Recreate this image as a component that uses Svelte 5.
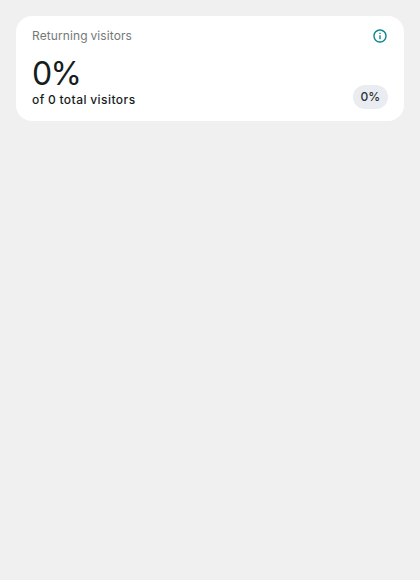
<script>
  let { title = 'Returning visitors', value = '0%', total = 0, change = '0%' } = $props();
</script>

<main>
  <section class="card">
    <header>
      <h2>{title}</h2>
      <svg class="info" viewBox="0 0 24 24" aria-label="Info">
        <path d="M11 7h2v2h-2zm0 4h2v6h-2zm1-9C6.48 2 2 6.48 2 12s4.48 10 10 10 10-4.48 10-10S17.52 2 12 2zm0 18c-4.41 0-8-3.59-8-8s3.59-8 8-8 8 3.59 8 8-3.59 8-8 8z" />
      </svg>
    </header>
    <div class="body">
      <div class="metric">
        <div class="value">{value}</div>
        <div class="total">of {total} total visitors</div>
      </div>
      <span class="badge">{change}</span>
    </div>
  </section>
</main>

<style>
  :global(body) {
    margin: 0;
    background: #f0f0f0;
  }
  main {
    box-sizing: border-box;
    min-height: 580px;
    padding: 16px;
    font-family: 'Google Sans', Inter, sans-serif;
  }
  .card {
    box-sizing: border-box;
    height: 105px;
    padding: 12px 16px;
    border-radius: 16px;
    background: #fff;
    color: #161d1d;
  }
  header {
    display: flex;
    justify-content: space-between;
    align-items: center;
    height: 16px;
  }
  h2 {
    margin: 0;
    font-size: 12px;
    line-height: 16px;
    font-weight: 400;
    letter-spacing: 0.1px;
    word-spacing: -0.6px;
    color: #747878;
  }
  .info {
    width: 16px;
    height: 16px;
    fill: #00838a;
  }
  .body {
    display: flex;
    justify-content: space-between;
    align-items: flex-end;
    height: 65px;
  }
  .metric {
    padding-bottom: 1px;
  }
  .value {
    font-size: 32px;
    line-height: 36px;
    font-weight: 400;
    letter-spacing: -1.7px;
  }
  .total {
    font-size: 12px;
    line-height: 16px;
    font-weight: 500;
    letter-spacing: 0.46px;
    word-spacing: -0.4px;
  }
  .badge {
    padding: 4px 8px;
    border-radius: 12px;
    background: #e9edf1;
    color: #2b3133;
    font-size: 12px;
    line-height: 16px;
    font-weight: 500;
    letter-spacing: -0.1px;
  }
</style>
